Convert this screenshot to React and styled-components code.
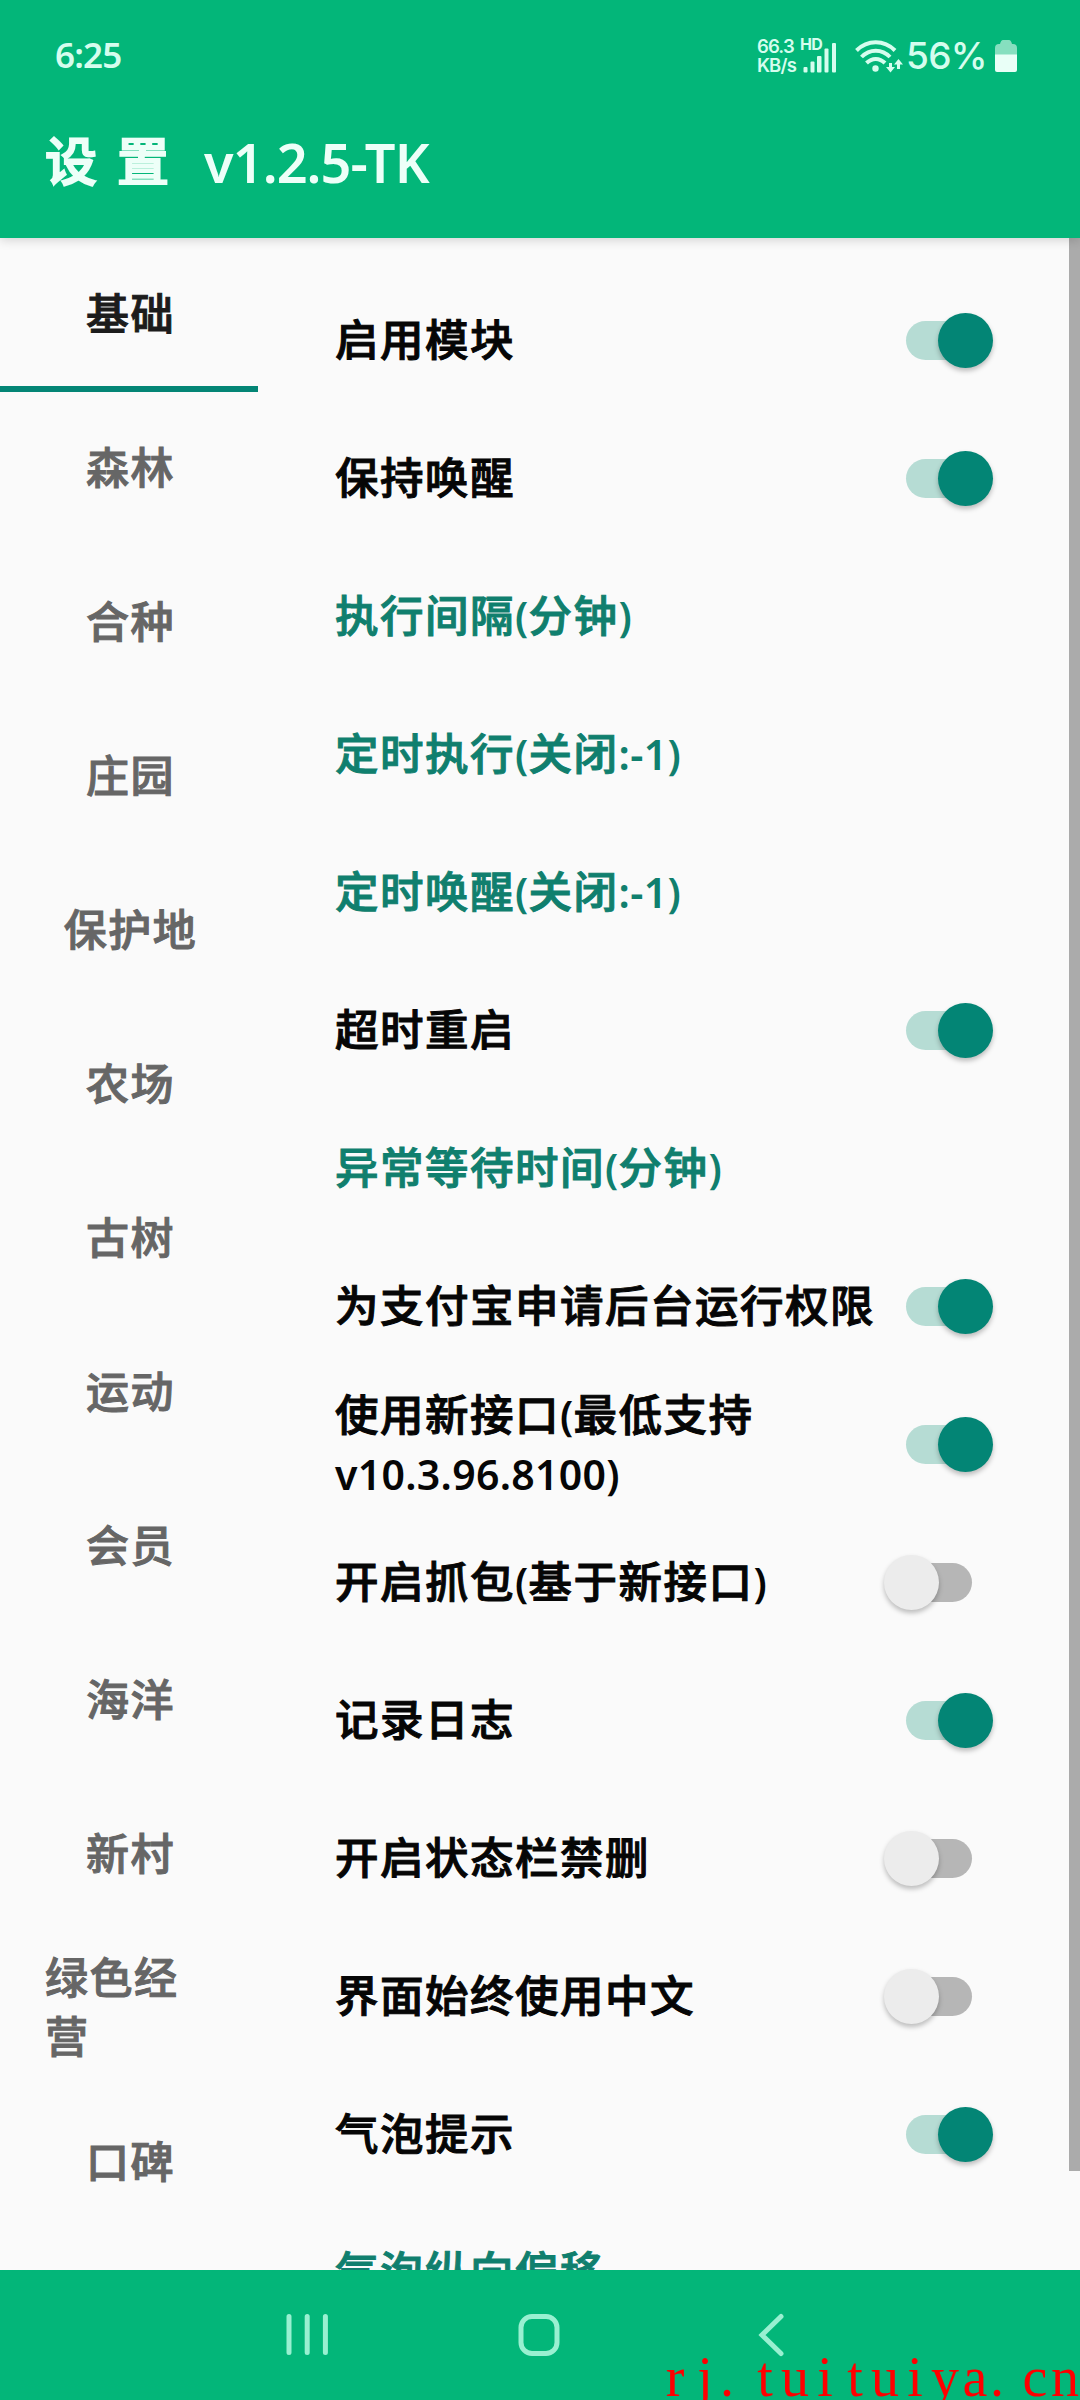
import { Fragment } from 'react'
import styled, { createGlobalStyle, css } from 'styled-components'

const colors = {
  primary: '#03b679',
  accent: '#038575',
  accentText: '#107f6e',
  track: '#b6dcd4',
  background: '#fafafa',
  statusText: '#d5fdee',
  navIcon: '#99f0d1',
}

const tabs = [
  '基础',
  '森林',
  '合种',
  '庄园',
  '保护地',
  '农场',
  '古树',
  '运动',
  '会员',
  '海洋',
  '新村',
  '绿色经营',
  '口碑',
]

const settings = [
  { title: '启用模块', type: 'switch', value: true },
  { title: '保持唤醒', type: 'switch', value: true },
  { title: '执行间隔(分钟)', type: 'input' },
  { title: '定时执行(关闭:-1)', type: 'input' },
  { title: '定时唤醒(关闭:-1)', type: 'input' },
  { title: '超时重启', type: 'switch', value: true },
  { title: '异常等待时间(分钟)', type: 'input' },
  { title: '为支付宝申请后台运行权限', type: 'switch', value: true },
  { title: '使用新接口(最低支持v10.3.96.8100)', type: 'switch', value: true },
  { title: '开启抓包(基于新接口)', type: 'switch', value: false },
  { title: '记录日志', type: 'switch', value: true },
  { title: '开启状态栏禁删', type: 'switch', value: false },
  { title: '界面始终使用中文', type: 'switch', value: false },
  { title: '气泡提示', type: 'switch', value: true },
  { title: '气泡纵向偏移', type: 'input' },
]

// Latin runs use a smaller face than the Chinese glyphs around them
const MixedText = ({ children }) =>
  children
    .split(/([\x21-\x7e]+)/)
    .map((part, index) =>
      index % 2 ? <Latin key={index}>{part}</Latin> : <Fragment key={index}>{part}</Fragment>
    )

const SignalIcon = () => (
  <svg width='34' height='30' viewBox='0 0 34 30' fill={colors.statusText}>
    <rect x='0.5' y='24' width='4' height='5.5' rx='1' />
    <rect x='7.5' y='18.5' width='4' height='11' rx='1' />
    <rect x='14' y='13' width='4.5' height='16.5' rx='1' />
    <rect x='21.5' y='5.5' width='4' height='24' rx='1' />
    <rect x='29' y='0' width='4' height='29.5' rx='1' />
  </svg>
)

const WifiIcon = () => (
  <svg width='48' height='34' viewBox='0 0 48 34' fill='none' stroke={colors.statusText}>
    <g strokeWidth='4'>
      <path d='M1.5 11.5C12.5 0.5 29 0.5 40 11.5' />
      <path d='M6.5 18C14.5 9.5 27 9.5 35 18' />
      <path d='M11.5 24C17 18.5 24.5 18.5 30 24' />
    </g>
    <circle cx='20.5' cy='29.5' r='3.2' fill={colors.statusText} stroke='none' />
    <path d='M35.5 24V31M43.5 30V23' strokeWidth='3' />
    <path
      d='M31 28H40L35.5 33.5ZM39 25.5H48L43.5 20Z'
      fill={colors.statusText}
      stroke='none'
    />
  </svg>
)

const BatteryIcon = () => (
  <svg width='22' height='34' viewBox='0 0 22 34'>
    <path d='M0 16V9Q0 5 4 5H5Q6 1 8 1H14Q16 1 17 5H18Q22 5 22 9V16Z' fill='#86dfbf' />
    <path d='M0 15.5H22V31Q22 33 20 33H2Q0 33 0 31Z' fill='#e9fff7' />
  </svg>
)

const RecentsIcon = () => (
  <svg width='44' height='44' viewBox='0 0 44 44' stroke={colors.navIcon} strokeWidth='5'>
    <path d='M4 3.5V39.5M22.2 3.5V39.5M40.4 3.5V39.5' strokeLinecap='round' />
  </svg>
)

const HomeIcon = () => (
  <svg width='44' height='44' viewBox='0 0 44 44' fill='none' stroke={colors.navIcon}>
    <rect x='4' y='3.5' width='36' height='37' rx='11' strokeWidth='5' />
  </svg>
)

const BackIcon = () => (
  <svg width='30' height='44' viewBox='0 0 30 44' fill='none' stroke={colors.navIcon}>
    <path d='M24 3.5L5 22L24 40.5' strokeWidth='5' strokeLinecap='round' />
  </svg>
)

const Switch = ({ checked }) => (
  <SwitchWrap role='switch' aria-checked={checked}>
    <Track $checked={checked} />
    <Thumb $checked={checked} />
  </SwitchWrap>
)

const App = () => (
  <>
    <GlobalStyle />
    <Screen>
      <Header>
        <StatusBar>
          <Clock>6:25</Clock>
          <StatusInfo>
            <Speed>
              <span>66.3</span>
              <span>KB/s</span>
            </Speed>
            <Signal>
              <SignalLabel>HD</SignalLabel>
              <SignalIcon />
            </Signal>
            <WifiIcon />
            <Percent>56%</Percent>
            <BatteryIcon />
          </StatusInfo>
        </StatusBar>
        <TitleBar>
          <Title>设</Title>
          <Title>置</Title>
          <Version>v1.2.5-TK</Version>
        </TitleBar>
      </Header>
      <Content>
        <TabList>
          {tabs.map((tab, index) => (
            <Tab key={tab} $active={index === 0}>
              <span>{tab}</span>
            </Tab>
          ))}
        </TabList>
        <SettingList>
          {settings.map(({ title, type, value }) => (
            <SettingRow key={title} $accent={type === 'input'}>
              <SettingTitle>
                <MixedText>{title}</MixedText>
              </SettingTitle>
              {type === 'switch' && <Switch checked={value} />}
            </SettingRow>
          ))}
        </SettingList>
        <ScrollBar />
      </Content>
      <NavBar>
        <RecentsIcon />
        <HomeIcon />
        <BackIcon />
        <Watermark>
          {[...'rj.tuituiya.cn'].map((char, index) => (
            <WatermarkChar key={index} $start={char === '.'}>
              {char}
            </WatermarkChar>
          ))}
        </Watermark>
      </NavBar>
    </Screen>
  </>
)

export default App

const GlobalStyle = createGlobalStyle`
  * {
    box-sizing: border-box;
  }

  body {
    margin: 0;
    font-family: 'Noto Sans CJK SC', sans-serif;
  }
`

const roundStroke = css`
  font-weight: 500;
  -webkit-text-stroke: 1px currentColor;
  stroke-linejoin: round;
`

const Screen = styled.div`
  width: 1080px;
  height: 2400px;
  display: flex;
  flex-direction: column;
  overflow: hidden;
  background: ${colors.background};
`

const Header = styled.header`
  height: 238px;
  flex-shrink: 0;
  z-index: 1;
  background: ${colors.primary};
  box-shadow: 0 2px 10px rgba(0, 0, 0, 0.16);
`

const StatusBar = styled.div`
  height: 112px;
  padding: 0 63px 0 55px;
  display: flex;
  justify-content: space-between;
  align-items: center;
  color: ${colors.statusText};
`

const Clock = styled.span`
  margin-top: -3px;
  font: 600 35px/40px 'Noto Sans', sans-serif;
  letter-spacing: -0.8px;
`

const StatusInfo = styled.div`
  display: flex;
  align-items: center;
`

const Speed = styled.div`
  width: 46px;
  display: flex;
  flex-direction: column;
  font: 600 18.5px/19px Inter, sans-serif;
  letter-spacing: -0.8px;
`

const Signal = styled.div`
  position: relative;
  display: flex;
  padding-top: 3px;
  margin-right: 18px;
`

const SignalLabel = styled.span`
  position: absolute;
  top: -4px;
  left: -3px;
  font: 700 16px/16px Inter, sans-serif;
  letter-spacing: -0.6px;
`

const Percent = styled.span`
  margin: 0 8px 0 3px;
  font: 500 37px/40px Inter, sans-serif;
  letter-spacing: -0.6px;
`

const TitleBar = styled.div`
  height: 94px;
  padding-left: 45px;
  display: flex;
  align-items: center;
  color: #edfff8;
`

const Title = styled.span`
  width: 72px;
  font-size: 52px;
  line-height: 60px;
  ${roundStroke}
  -webkit-text-stroke-width: 2px;
`

const Version = styled.span`
  margin: 6px 0 0 15px;
  font: 600 54px/60px 'Noto Sans', sans-serif;
  letter-spacing: -0.9px;
`

const Content = styled.main`
  flex: 1;
  min-height: 0;
  display: flex;
`

const TabList = styled.nav`
  width: 258px;
  flex-shrink: 0;
`

const Tab = styled.div`
  height: 154px;
  padding: 0 42px 2px 45px;
  display: flex;
  align-items: center;
  justify-content: center;
  border-bottom: 6px solid ${({ $active }) => ($active ? colors.accent : 'transparent')};
  color: ${({ $active }) => ($active ? '#1c1c1c' : '#666')};
  font-size: 43px;
  letter-spacing: 1.5px;
  line-height: 59px;
  ${roundStroke}
`

const SettingList = styled.section`
  flex: 1;
  padding: 33px 76px 0 77px;
  overflow: hidden;
`

const SettingRow = styled.div`
  height: 138px;
  display: flex;
  align-items: center;
  justify-content: space-between;
  color: ${({ $accent }) => ($accent ? colors.accentText : '#060606')};
`

const SettingTitle = styled.span`
  padding-bottom: 5px;
  font-size: 43.5px;
  letter-spacing: 1.5px;
  line-height: 59px;
  ${roundStroke}
`

const Latin = styled.span`
  font: 600 41px/1 'Noto Sans', sans-serif;
  -webkit-text-stroke: 0;
  letter-spacing: 0.3px;
  white-space: nowrap;
`

const SwitchWrap = styled.div`
  width: 109px;
  height: 55px;
  flex-shrink: 0;
  display: grid;
  align-items: center;

  > * {
    grid-area: 1 / 1;
  }
`

const Track = styled.div`
  width: 66px;
  height: 39px;
  justify-self: center;
  border-radius: 20px;
  background: ${({ $checked }) => ($checked ? colors.track : '#b6b6b6')};
`

const Thumb = styled.div`
  width: 55px;
  height: 55px;
  justify-self: ${({ $checked }) => ($checked ? 'end' : 'start')};
  border-radius: 50%;
  background: ${({ $checked }) => ($checked ? colors.accent : '#ececec')};
  box-shadow: 0 3px 5px rgba(0, 0, 0, 0.25);
`

const ScrollBar = styled.div`
  width: 11px;
  height: 1933px;
  background: #ababab;
`

const NavBar = styled.footer`
  position: relative;
  height: 130px;
  flex-shrink: 0;
  padding-left: 285px;
  display: flex;
  align-items: center;
  background: ${colors.primary};

  > svg + svg {
    margin-left: 188px;
  }

  > svg:nth-of-type(3) {
    margin-left: 196px;
  }
`

const Watermark = styled.div`
  position: absolute;
  right: 0;
  bottom: -7px;
  white-space: nowrap;
  color: #f00;
  font: 56px/60px 'Liberation Serif', serif;
`

const WatermarkChar = styled.span`
  width: 30px;
  display: inline-block;
  text-align: ${({ $start }) => ($start ? 'left' : 'center')};
`
